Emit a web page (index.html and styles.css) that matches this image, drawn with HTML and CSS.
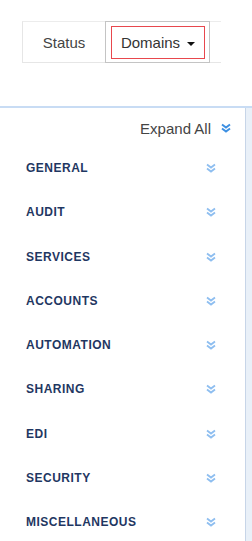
FILE: index.html
```html
<!DOCTYPE html>
<html lang="en">
<head>
    <meta charset="UTF-8">
    <meta name="viewport" content="width=device-width, initial-scale=1.0">
    <title>Domains</title>
    <link rel="stylesheet" href="styles.css">
</head>
<body>
    <div class="tabs">
        <div class="tab">Status</div>
        <div class="tab tab-active">
            <div class="tab-focus">Domains <span class="caret"></span></div>
        </div>
    </div>

    <div class="panel">
        <div class="panel-main">
            <div class="expand-all">
                Expand All
                <svg class="chev chev-dark" viewBox="0 0 10 10" width="10" height="10"><path d="M1 1.5 L5 4.5 L9 1.5 M1 5.5 L5 8.5 L9 5.5" fill="none" stroke="currentColor" stroke-width="2"/></svg>
            </div>

            <div class="section"><span>GENERAL</span><svg class="chev" viewBox="0 0 10 10" width="10" height="10"><path d="M1 1.5 L5 4.5 L9 1.5 M1 5.5 L5 8.5 L9 5.5" fill="none" stroke="currentColor" stroke-width="1.8"/></svg></div>
            <div class="section"><span>AUDIT</span><svg class="chev" viewBox="0 0 10 10" width="10" height="10"><path d="M1 1.5 L5 4.5 L9 1.5 M1 5.5 L5 8.5 L9 5.5" fill="none" stroke="currentColor" stroke-width="1.8"/></svg></div>
            <div class="section"><span>SERVICES</span><svg class="chev" viewBox="0 0 10 10" width="10" height="10"><path d="M1 1.5 L5 4.5 L9 1.5 M1 5.5 L5 8.5 L9 5.5" fill="none" stroke="currentColor" stroke-width="1.8"/></svg></div>
            <div class="section"><span>ACCOUNTS</span><svg class="chev" viewBox="0 0 10 10" width="10" height="10"><path d="M1 1.5 L5 4.5 L9 1.5 M1 5.5 L5 8.5 L9 5.5" fill="none" stroke="currentColor" stroke-width="1.8"/></svg></div>
            <div class="section"><span>AUTOMATION</span><svg class="chev" viewBox="0 0 10 10" width="10" height="10"><path d="M1 1.5 L5 4.5 L9 1.5 M1 5.5 L5 8.5 L9 5.5" fill="none" stroke="currentColor" stroke-width="1.8"/></svg></div>
            <div class="section"><span>SHARING</span><svg class="chev" viewBox="0 0 10 10" width="10" height="10"><path d="M1 1.5 L5 4.5 L9 1.5 M1 5.5 L5 8.5 L9 5.5" fill="none" stroke="currentColor" stroke-width="1.8"/></svg></div>
            <div class="section"><span>EDI</span><svg class="chev" viewBox="0 0 10 10" width="10" height="10"><path d="M1 1.5 L5 4.5 L9 1.5 M1 5.5 L5 8.5 L9 5.5" fill="none" stroke="currentColor" stroke-width="1.8"/></svg></div>
            <div class="section"><span>SECURITY</span><svg class="chev" viewBox="0 0 10 10" width="10" height="10"><path d="M1 1.5 L5 4.5 L9 1.5 M1 5.5 L5 8.5 L9 5.5" fill="none" stroke="currentColor" stroke-width="1.8"/></svg></div>
            <div class="section"><span>MISCELLANEOUS</span><svg class="chev" viewBox="0 0 10 10" width="10" height="10"><path d="M1 1.5 L5 4.5 L9 1.5 M1 5.5 L5 8.5 L9 5.5" fill="none" stroke="currentColor" stroke-width="1.8"/></svg></div>
        </div>
        <div class="panel-side"></div>
    </div>
</body>
</html>
```

FILE: styles.css
```css
body {
    margin: 0;
    font-family: "Liberation Sans", Arial, sans-serif;
    background: white;
    color: #333;
    overflow: hidden;
}
.tabs {
    display: flex;
    width: 198px;
    height: 40px;
    margin: 21px 0 0 22px;
    border-top: 1px solid #ececec;
    border-bottom: 1px solid #e6e6e6;
    border-left: 1px solid #e6e6e6;
}
.tab {
    width: 82px;
    display: flex;
    align-items: center;
    justify-content: center;
    font-size: 15px;
    color: #444;
}
.tab-active {
    width: 94px;
    margin-top: -1px;
    height: 40px;
    border: 1px solid #c4c4c4;
    padding: 0 4px 0 5px;
}
.tab-focus {
    flex: 1;
    height: 31px;
    margin-top: 1px;
    border: 1px solid #e8474d;
    display: flex;
    align-items: center;
    justify-content: center;
    gap: 7px;
    color: #333;
}
.caret {
    width: 0;
    height: 0;
    border-left: 4px solid transparent;
    border-right: 4px solid transparent;
    border-top: 4px solid #111;
    margin-top: 2px;
}
.panel {
    display: flex;
    margin-top: 43px;
    border-top: 2px solid #c8dcf4;
    height: 440px;
}
.panel-main {
    width: 245px;
    padding-top: 11px;
}
.panel-side {
    flex: 1;
    border-left: 1px solid #c7d5e8;
    background: #e9f0f8;
}
.expand-all {
    display: flex;
    justify-content: flex-end;
    align-items: center;
    gap: 10px;
    padding-right: 14px;
    font-size: 15px;
    color: #444;
    height: 18px;
    margin-bottom: 9px;
}
.chev {
    color: #8ebef0;
}
.chev-dark {
    color: #3c8fe2;
}
.section {
    display: flex;
    justify-content: space-between;
    align-items: center;
    height: 44.25px;
    padding: 0 29px 0 26px;
    font-size: 12px;
    font-weight: bold;
    letter-spacing: 0.5px;
    color: #1f3762;
}
```
